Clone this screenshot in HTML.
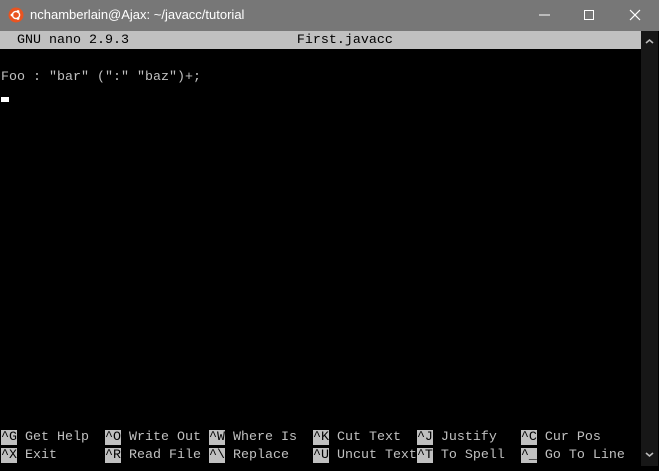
<!DOCTYPE html><html><head><style>
body{margin:0;width:659px;height:466px;background:#000;overflow:hidden;position:relative;font-family:"Liberation Mono",monospace}
#tb{position:absolute;left:0;top:0;width:659px;height:31px;background:#777}
#tt{position:absolute;left:30px;top:7px;color:#fff;font:13px "Liberation Sans",sans-serif}
.r{position:absolute;left:1px;height:18px;line-height:18px;font-size:13.33px;color:#c0c0c0;white-space:pre}
.k{background:#c0c0c0;color:#000}
#sb{position:absolute;left:641px;top:31px;width:17px;height:435px;background:#171717}
</style></head><body>
<div id="tb"><svg width="659" height="31" style="position:absolute;left:0;top:0">
<circle cx="16" cy="15" r="7.5" fill="#e95420"/>
<circle cx="16" cy="15" r="3.6" fill="none" stroke="#fff" stroke-width="1.4"/>
<circle cx="12" cy="15" r="1.4" fill="#fff"/><circle cx="18" cy="11.5" r="1.4" fill="#fff"/><circle cx="18" cy="18.5" r="1.4" fill="#fff"/>
<line x1="539" y1="15" x2="550" y2="15" stroke="#fff" stroke-width="1"/>
<rect x="584.5" y="10.5" width="9" height="9" fill="none" stroke="#fff"/>
<path d="M630 10L640 20M640 10L630 20" stroke="#fff" stroke-width="1.2"/>
</svg><div id="tt">nchamberlain@Ajax: ~/javacc/tutorial</div></div>
<div style="position:absolute;left:0;top:31px;width:641px;height:18px;background:#c0c0c0"></div>
<div class="r" style="top:32px;color:#000">  GNU nano 2.9.3                     First.javacc</div>
<div class="r" style="top:69px">Foo : "bar" (":" "baz")+;</div>
<div style="position:absolute;left:1px;top:97px;width:8px;height:5px;background:#fff"></div>
<div class="r" style="top:429px"><span class="k">^G</span> Get Help  <span class="k">^O</span> Write Out <span class="k">^W</span> Where Is  <span class="k">^K</span> Cut Text  <span class="k">^J</span> Justify   <span class="k">^C</span> Cur Pos</div>
<div class="r" style="top:447px"><span class="k">^X</span> Exit      <span class="k">^R</span> Read File <span class="k">^\</span> Replace   <span class="k">^U</span> Uncut Text<span class="k">^T</span> To Spell  <span class="k">^_</span> Go To Line</div>
<div id="sb"><svg width="17" height="435"><path d="M5 12L8.5 9L12 12" stroke="#bbb" stroke-width="1.6" fill="none"/><path d="M5 422L8.5 425L12 422" stroke="#bbb" stroke-width="1.6" fill="none"/></svg></div>
</body></html>
